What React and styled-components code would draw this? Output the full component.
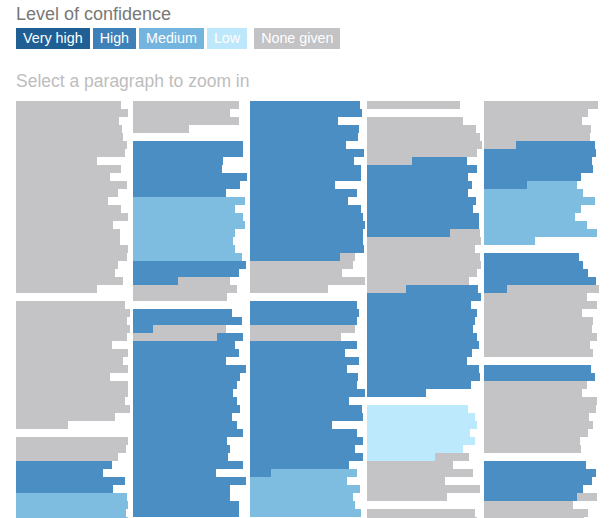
import styled, { createGlobalStyle } from 'styled-components'

const GlobalStyle = createGlobalStyle`
  html, body {
    margin: 0;
    padding: 0;
    background: #fff;
  }

  body {
    font-family: "Liberation Sans", Arial, sans-serif;
    overflow: hidden;
  }
`

const tones = {
  g: '#c4c3c6',
  h: '#4b8ec3',
  m: '#7ebde0',
  l: '#bde9fc'
}

const legend = [
  { label: 'Very high', bg: '#1f5f94', color: '#fff' },
  { label: 'High', bg: '#3d81b8', color: '#fff' },
  { label: 'Medium', bg: '#73b5de', color: '#fff' },
  { label: 'Low', bg: '#bde8fb', color: '#fff', spaced: true },
  { label: 'None given', bg: '#c3c2c5', color: '#fff' }
]

// each paragraph: tone letter switches colour, a number is a line's width,
// "g45/h100" is a line that changes colour part way (right edges)
const columns = [
  [
    'g 105 112 103 106 107 111 109 81 105 94 111 102 92 105 112 97 104 104 112 111 102 99 107 81',
    'g 109 114 111 114 111 96 112 107 112 94 112 112 109 114 99 52',
    'g 112 110 102 h 96 87 109 97 m 111 112 110 112'
  ],
  [
    'g 106 97 106 56',
    'h 110 110 90 89 114 107 93 m 112 102 110 112 102 100 102 109 h 113 106 h45/g97 104 94',
    'h 99 109 h20/g93 g84/h110 102 106 93 113 107 104 100 104 107 99 104 110 94 97 95 110 83 113 97 97 106 106'
  ],
  [
    'h 110 112 88 109 108 96 114 104 111 111 85 107 98 111 113 115 113 113 114 h90/g105 103 92 115 78',
    'h 107 109 107 g 105 91 h 107 95 109 97 108 107 115 99 112 113 82 107 113 105 113 99 h21/m107 97 110 103 105 111'
  ],
  [
    'g 93',
    'g 96 109 113 115 110 g45/h100 110 101 105 101 109 106 112 112 h83/g113 114 108 113 114 110 102 g39/h111 114 104 110 108 106 110 112 105 100 112 113 104 59',
    'l 101 108 110 103 108 96 l68/g102 86 106 78 113 80',
    'g 108 110 105 112'
  ],
  [
    'g 114 104 98 107 106 g32/h111 112 108 109 97 h43/m93 99 111 97 91 103 113 51',
    'h 95 99 104 112 h23/g115 103 113 98 109 108 113 106 109',
    'h 107 111 g 103 98 113 112 105 109 104 96 97',
    'h 102 112 108 99 h93/g113 89 104 100'
  ]
]

function parseParagraph(spec) {
  let tone = 'g'
  const lines = []
  spec.split(' ').forEach((token) => {
    if (tones[token]) {
      tone = token
      return
    }
    if (token.includes('/')) {
      const segs = token.split('/').map((s) => [s[0], Number(s.slice(1))])
      tone = segs[segs.length - 1][0]
      lines.push(segs)
      return
    }
    lines.push([[tone, Number(token)]])
  })
  return lines
}

export default function App() {
  return (
    <Page>
      <GlobalStyle />
      <Title>Level of confidence</Title>
      <Legend>
        {legend.map((item) => (
          <Badge
            key={item.label}
            $bg={item.bg}
            $color={item.color}
            $spaced={item.spaced}
          >
            {item.label}
          </Badge>
        ))}
      </Legend>
      <Hint>Select a paragraph to zoom in</Hint>
      <Overview>
        {columns.map((paragraphs, ci) => (
          <Column key={ci}>
            {paragraphs.map((spec, pi) => (
              <Paragraph key={pi}>
                {parseParagraph(spec).map((segs, li) => {
                  let prev = 0
                  return (
                    <Line key={li}>
                      {segs.map(([tone, right], si) => {
                        const width = right - prev
                        prev = right
                        return (
                          <Segment key={si} $tone={tone} style={{ width }} />
                        )
                      })}
                    </Line>
                  )
                })}
              </Paragraph>
            ))}
          </Column>
        ))}
      </Overview>
    </Page>
  )
}

const Page = styled.div`
  display: flex;
  flex-direction: column;
  height: 100vh;
  padding: 4px 0 0 16px;
  box-sizing: border-box;
`

const Title = styled.div`
  font-size: 18px;
  line-height: 20px;
  color: #787878;
  margin-bottom: 4px;
`

const Legend = styled.div`
  display: flex;
  gap: 3px;
`

const Badge = styled.span`
  display: inline-block;
  height: 21px;
  line-height: 21px;
  padding: 0 7px;
  font-size: 14.3px;
  background: ${(p) => p.$bg};
  color: ${(p) => p.$color};
  margin-right: ${(p) => (p.$spaced ? '4px' : '0')};
`

const Hint = styled.div`
  margin-top: 22px;
  font-size: 17.5px;
  line-height: 20px;
  color: #bdbdbd;
`

const Overview = styled.div`
  display: flex;
  margin-top: 10px;
  flex: 1;
  overflow: hidden;
`

const Column = styled.div`
  display: flex;
  flex-direction: column;
  gap: 8px;
  width: 117px;
  flex: none;
`

const Paragraph = styled.div`
  display: flex;
  flex-direction: column;
`

const Line = styled.div`
  display: flex;
  height: 8px;
`

const Segment = styled.div`
  height: 100%;
  flex: none;
  background: ${(p) => tones[p.$tone]};
`
